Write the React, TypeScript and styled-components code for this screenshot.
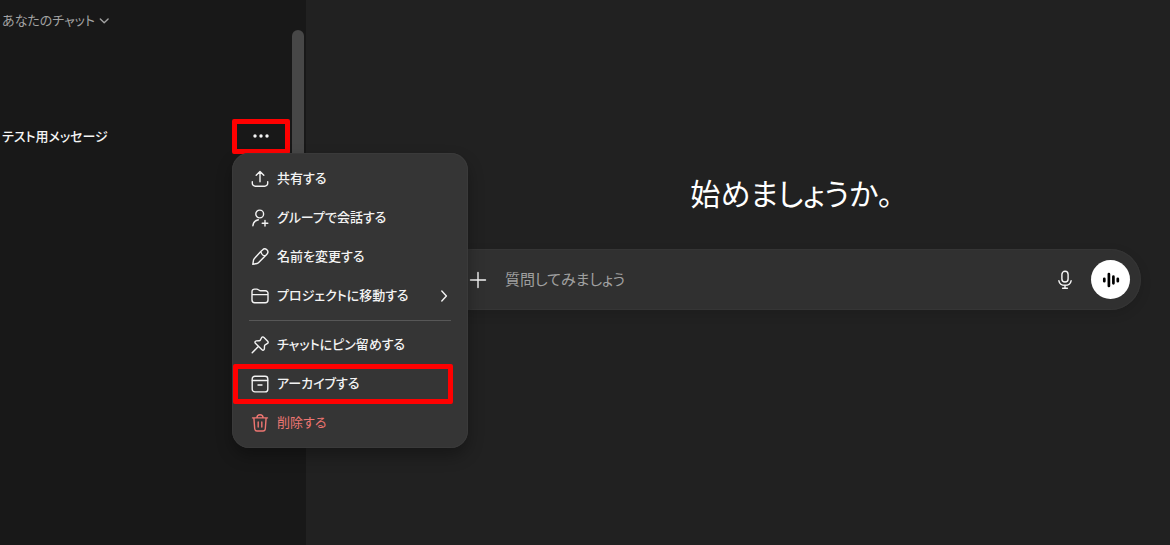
import React from "react";
import styled, { createGlobalStyle, css } from "styled-components";

const GlobalStyle = createGlobalStyle`
  * { box-sizing: border-box; }
  body {
    margin: 0;
    background: #212121;
    color: #f5f5f5;
    font-family: "Noto Sans CJK JP", sans-serif;
    font-feature-settings: "palt";
    font-size: 13px;
    line-height: 20px;
  }
  button, input { font: inherit; font-feature-settings: inherit; color: inherit; }
  button { background: none; border: 0; padding: 0; cursor: pointer; }
`;

const marked = css`
  border: 5px solid #ff0000;
  border-radius: 2px;
`;

const Page = styled.div`
  display: flex;
  min-height: 100vh;
`;

const Sidebar = styled.aside`
  position: relative;
  z-index: 1;
  display: flex;
  flex: 0 0 306px;
  padding-right: 2px;
  background: #181818;
`;

const History = styled.nav`
  flex: 1;
  min-width: 0;
  padding: 10px 2px 0;
`;

const SectionToggle = styled.button`
  display: flex;
  align-items: center;
  gap: 3px;
  margin-bottom: 89px;
  color: #a3a3a3;
`;

const ChatRow = styled.div`
  position: relative;
  z-index: 1;
  display: flex;
  align-items: center;
  justify-content: space-between;
`;

const ChatLink = styled.a`
  padding-bottom: 2px;
  color: #f5f5f5;
  font-weight: 500;
  text-decoration: none;
`;

const MoreButton = styled.button`
  ${marked}
  display: flex;
  align-items: center;
  justify-content: center;
  width: 58px;
  height: 35px;
  padding-bottom: 2px;
`;

const ScrollTrack = styled.div`
  flex: 0 0 12px;
  padding-top: 30px;
`;

const ScrollThumb = styled.div`
  height: 55vh;
  border-radius: 6px;
  background: #474747;
`;

const Menu = styled.div`
  position: absolute;
  top: 34px;
  left: 230px;
  width: 236px;
  padding: 6px 0;
  border-radius: 17px;
  background: #353535;
  box-shadow: 0 8px 16px rgba(0, 0, 0, 0.3), inset 0 0 0 1px #3a3a3a;
`;

const MenuItem = styled.button<{ $danger?: boolean; $marked?: boolean }>`
  position: relative;
  display: flex;
  align-items: center;
  gap: 7px;
  width: 100%;
  height: 39px;
  padding: 0 18px;
  color: ${(p) => (p.$danger ? "#ee7672" : "#f3f3f3")};
  font-weight: ${(p) => (p.$danger ? 400 : 500)};
  text-align: left;
  white-space: nowrap;

  ${(p) =>
    p.$marked &&
    css`
      &::after {
        ${marked}
        content: "";
        position: absolute;
        inset: 0 15px -1px 1px;
      }
    `}
`;

const ItemLabel = styled.span`
  flex: 1;
  padding-bottom: 2px;
`;

const Divider = styled.hr`
  height: 1px;
  margin: 5px 17px 4px;
  border: 0;
  background: #575757;
`;

const Main = styled.main`
  flex: 1;
  min-width: 0;
  padding: 168px 29px 0 136px;
`;

const Heading = styled.h1`
  margin: 0 0 33px;
  font-size: 30px;
  font-weight: 400;
  line-height: 48px;
  color: #ffffff;
  text-align: center;
`;

const Composer = styled.form`
  display: flex;
  align-items: center;
  height: 61px;
  padding: 0 11px 0 26px;
  border-radius: 31px;
  background: #303030;
  box-shadow: 0 4px 12px rgba(0, 0, 0, 0.12), inset 0 0 0 1px #353535;
`;

const IconButton = styled.button`
  display: flex;
`;

const Prompt = styled.input`
  flex: 1;
  min-width: 0;
  margin: 0 17px;
  padding: 0 0 2px;
  border: 0;
  outline: 0;
  background: none;
  font-size: 15px;
  line-height: 24px;

  &::placeholder { color: #a0a0a0; opacity: 1; }
`;

const VoiceButton = styled.button`
  display: flex;
  align-items: center;
  justify-content: center;
  width: 39px;
  height: 39px;
  margin-left: 16px;
  border-radius: 50%;
  background: #ffffff;
  color: #000000;
`;

const Svg = styled.svg`
  display: block;
  flex: none;
  fill: none;
  stroke: currentColor;
  stroke-width: 1.4;
  stroke-linecap: round;
  stroke-linejoin: round;
`;

type IconProps = { size?: number; children: React.ReactNode };

const Icon = ({ size = 20, children }: IconProps) => (
  <Svg width={size} height={size} viewBox="0 0 20 20" aria-hidden="true">
    {children}
  </Svg>
);

const ShareIcon = () => (
  <Icon>
    <path d="M10 12.8V2.7M6.2 6.3L10 2.5l3.8 3.8M2.3 12.6v1.6a3 3 0 0 0 3 3h9.4a3 3 0 0 0 3-3v-1.6" />
  </Icon>
);

const PersonPlusIcon = () => (
  <Icon>
    <circle cx="9.7" cy="6" r="3.9" />
    <path d="M2.9 17.8c.3-3.4 2.2-5.3 5.4-6M15 12.4v5.6M12.2 15.2h5.6" />
  </Icon>
);

const PencilIcon = () => (
  <Icon>
    <path d="M11 4.300l1.500-1.400a2.900 2.900 0 0 1 4.400 4.300L8.700 15.600c-.5.5-1 .8-1.700.9l-4.200.8.7-4.200c.1-.7.4-1.200.9-1.700zM10.900 4.500c.3 2.400 2 4.100 4.400 4.400" />
  </Icon>
);

const FolderIcon = () => (
  <Icon>
    <path d="M2 8.4V5.7a2.6 2.6 0 0 1 2.6-2.6h2.2c.6 0 1.1.2 1.6.6l.8.6c.4.3.8.4 1.3.4h4.8A2.6 2.6 0 0 1 18 7.3v6.8a2.7 2.7 0 0 1-2.7 2.7H4.7A2.7 2.7 0 0 1 2 14.1V8.6h16" />
  </Icon>
);

const PinIcon = () => (
  <Icon>
    <path d="M11.7 2.5c.6-.8 1.6-.8 2.3-.1l3.700 3.800c.7.7.6 1.700-.2 2.200l-2.300 1.400c-.4.3-.7.7-.7 1.200l-.1 2.800c-.1 1.300-1.500 1.800-2.400.9L5.400 8.300c-.9-.9-.3-2.300.9-2.400l2.800-.1c.5 0 1-.3 1.200-.7zM8.300 11.500L2.200 17.800" />
  </Icon>
);

const ArchiveIcon = () => (
  <Icon>
    <rect x="2.2" y="2.3" width="15.6" height="15.6" rx="2.7" />
    <path d="M2.4 6.5h15.2M8 11h4" />
  </Icon>
);

const TrashIcon = () => (
  <Icon>
    <path d="M2.5 4.9h15M6.9 4.7C7 3 8.2 1.7 10 1.7S13 3 13.1 4.7M3.9 5.1l.8 10.7a2.4 2.4 0 0 0 2.4 2.2h5.8a2.4 2.4 0 0 0 2.4-2.200l.8-10.700M8.200 9v5M11.800 9v5" />
  </Icon>
);

const ChevronRight = () => (
  <Svg width="12" height="14" viewBox="0 0 12 14" aria-hidden="true">
    <path d="M3.800 2l4.600 5-4.600 5" />
  </Svg>
);

const ChevronDown = () => (
  <Svg width="12" height="12" viewBox="0 0 12 12" aria-hidden="true">
    <path d="M2.300 5l3.900 3.700L10.100 5" />
  </Svg>
);

const DotsIcon = () => (
  <svg width="18" height="6" viewBox="0 0 18 6" fill="currentColor" aria-hidden="true">
    <circle cx="3" cy="3" r="1.700" />
    <circle cx="9" cy="3" r="1.700" />
    <circle cx="15" cy="3" r="1.700" />
  </svg>
);

const PlusIcon = () => (
  <Icon>
    <path d="M10 2.500v15M2.500 10h15" />
  </Icon>
);

const MicIcon = () => (
  <Icon>
    <rect x="6.900" y="1.300" width="6.200" height="10.700" rx="3.100" />
    <path d="M3.900 10.800c.5 2.800 3 4.500 6.100 4.500s5.600-1.700 6.100-4.500M10 15.500v2.800M7.600 18.300h4.800" />
  </Icon>
);

const VoiceIcon = () => (
  <svg width="20" height="20" viewBox="0 0 20 20" fill="none" stroke="currentColor" strokeWidth="2.700" strokeLinecap="round" aria-hidden="true">
    <path d="M3.300 8.800v2.400M7.900 4v12M12.400 6.700v6.600M16.800 8.800v2.400" />
  </svg>
);

const App = () => (
  <Page>
    <GlobalStyle />
    <Sidebar>
      <History>
        <SectionToggle type="button" aria-expanded="true">
          あなたのチャット
          <ChevronDown />
        </SectionToggle>
        <ChatRow>
          <ChatLink href="#chat">テスト用メッセージ</ChatLink>
          <MoreButton type="button" aria-label="その他" aria-haspopup="menu" aria-expanded="true">
            <DotsIcon />
          </MoreButton>
          <Menu role="menu">
            <MenuItem type="button" role="menuitem">
              <ShareIcon />
              <ItemLabel>共有する</ItemLabel>
            </MenuItem>
            <MenuItem type="button" role="menuitem">
              <PersonPlusIcon />
              <ItemLabel>グループで会話する</ItemLabel>
            </MenuItem>
            <MenuItem type="button" role="menuitem">
              <PencilIcon />
              <ItemLabel>名前を変更する</ItemLabel>
            </MenuItem>
            <MenuItem type="button" role="menuitem" aria-haspopup="menu">
              <FolderIcon />
              <ItemLabel>プロジェクトに移動する</ItemLabel>
              <ChevronRight />
            </MenuItem>
            <Divider />
            <MenuItem type="button" role="menuitem">
              <PinIcon />
              <ItemLabel>チャットにピン留めする</ItemLabel>
            </MenuItem>
            <MenuItem type="button" role="menuitem" $marked>
              <ArchiveIcon />
              <ItemLabel>アーカイブする</ItemLabel>
            </MenuItem>
            <MenuItem type="button" role="menuitem" $danger>
              <TrashIcon />
              <ItemLabel>削除する</ItemLabel>
            </MenuItem>
          </Menu>
        </ChatRow>
      </History>
      <ScrollTrack aria-hidden="true">
        <ScrollThumb />
      </ScrollTrack>
    </Sidebar>
    <Main>
      <Heading>始めましょうか。</Heading>
      <Composer onSubmit={(e) => e.preventDefault()}>
        <IconButton type="button" aria-label="追加">
          <PlusIcon />
        </IconButton>
        <Prompt type="text" placeholder="質問してみましょう" aria-label="質問してみましょう" />
        <IconButton type="button" aria-label="音声入力">
          <MicIcon />
        </IconButton>
        <VoiceButton type="button" aria-label="音声モード">
          <VoiceIcon />
        </VoiceButton>
      </Composer>
    </Main>
  </Page>
);

export default App;
